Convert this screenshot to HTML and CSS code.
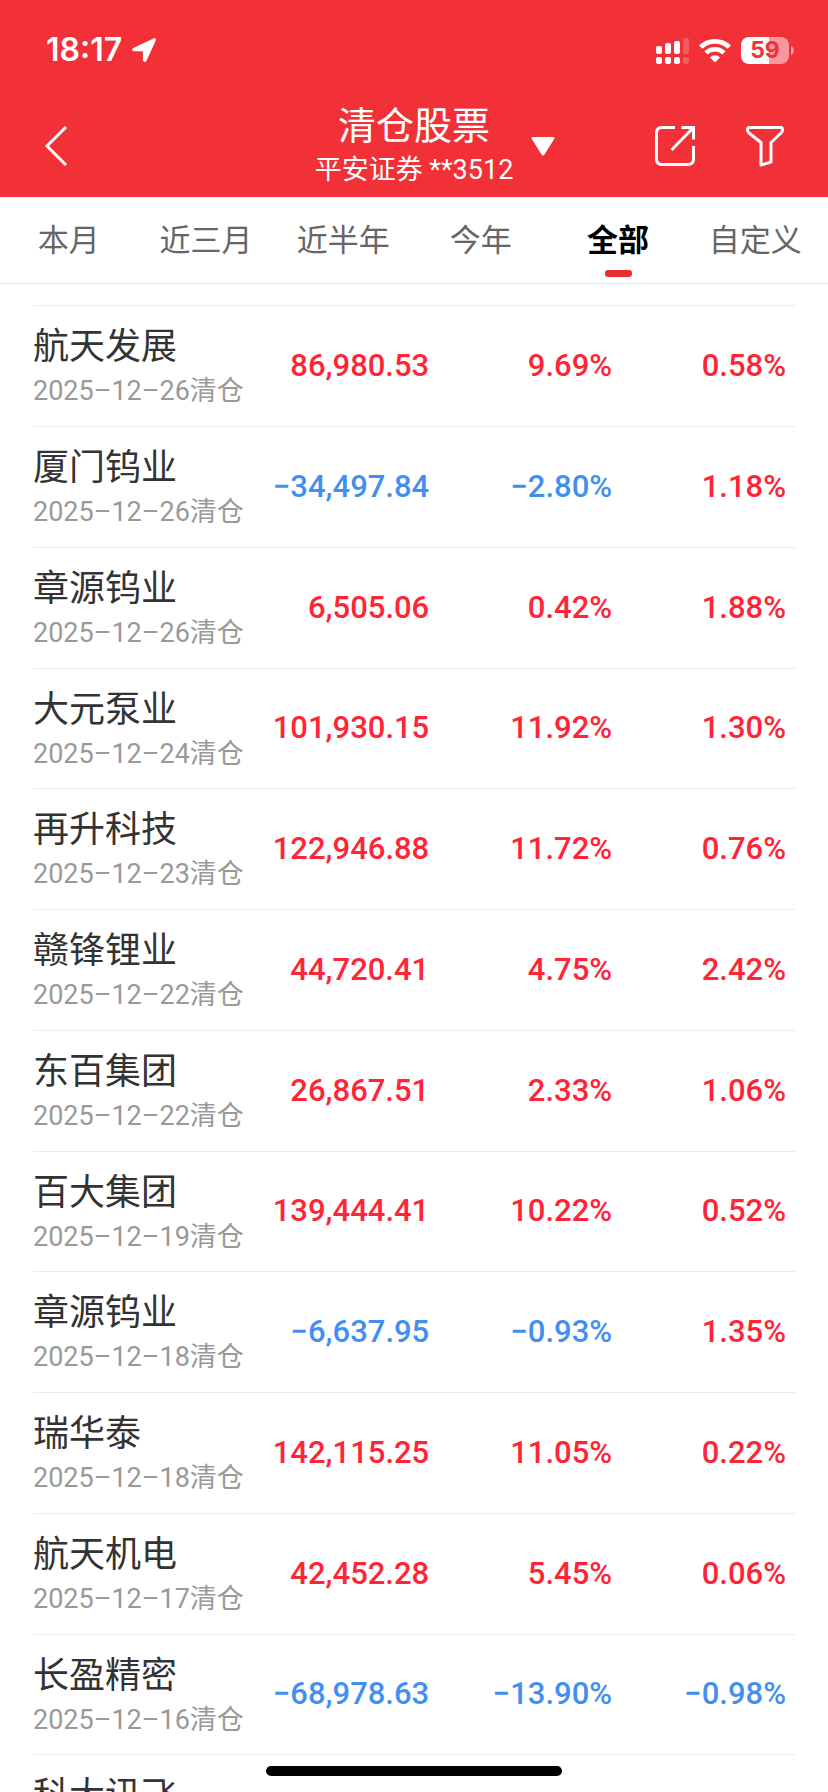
FILE: index.html
```html
<!DOCTYPE html>
<html lang="zh-CN">
<head>
<meta charset="utf-8">
<meta name="viewport" content="width=device-width, initial-scale=1">
<title>清仓股票</title>
<link rel="stylesheet" href="styles.css">
</head>
<body>
<header class="header">
  <div class="status">
    <div class="status-left">
      <span class="time">18:17</span>
      <svg class="location" width="24" height="24" viewBox="0 0 24 24" aria-hidden="true"><path d="M22 .3 1.300 10.100C-.5 11 0 13.200 2 13.200h8.300q.6 0 .6.6V22c0 2.200 2.700 2.600 3.500.9L23.800 2.400C24.400 1 23.400-.3 22 .3Z" fill="#fff"/></svg>
    </div>
    <div class="status-right">
      <svg width="33" height="27" viewBox="0 0 33 27" fill="#fff" aria-hidden="true">
        <rect x="0" y="9" width="6" height="8" rx="2"/><rect x="9" y="6" width="6" height="11" rx="2"/><rect x="18" y="4" width="6" height="13" rx="2"/>
        <rect x="0" y="20" width="6" height="7" rx="2"/><rect x="9" y="20" width="6" height="7" rx="2"/><rect x="18" y="20" width="6" height="7" rx="2"/>
        <g opacity=".2"><rect x="27" y="1" width="6" height="16" rx="2"/><rect x="27" y="20" width="6" height="7" rx="2"/></g>
      </svg>
      <svg class="wifi" width="32" height="25" viewBox="0 0 32 25" aria-hidden="true">
        <g fill="none" stroke="#fff" stroke-width="4.600"><path d="M1.700 9.200a20.500 20.500 0 0 1 28.600 0"/><path d="M7 14.900a13 13 0 0 1 18 0"/></g>
        <path d="M16 24.500 11 19.400a7 7 0 0 1 10 0Z" fill="#fff"/>
      </svg>
      <div class="battery"><span class="cell">59</span><svg width="3" height="9" viewBox="0 0 3 9" aria-hidden="true"><path d="M0 0q3 1.500 3 4.500T0 9Z" fill="#fff" opacity=".5"/></svg></div>
    </div>
  </div>
  <div class="nav">
    <button class="icon-button" aria-label="返回"><svg width="24" height="42" viewBox="0 0 24 42"><path d="M22 2 3 21l19 19" fill="none" stroke="#fff" stroke-width="3"/></svg></button>
    <button class="account">
      <span class="titles"><span class="title">清仓股票</span><span class="subtitle">平安证券 **3512</span></span>
      <svg class="caret" width="24" height="19" viewBox="0 0 24 19" aria-hidden="true"><path d="M2 0h20q2.500 0 1 2.200L13.500 17.500q-1.500 2-3 0L1 2.200Q-.5 0 2 0Z" fill="#fff"/></svg>
    </button>
    <div class="actions">
      <button class="icon-button" aria-label="分享"><svg width="42" height="42" viewBox="0 0 42 42" fill="none" stroke="#fff" stroke-width="3"><path d="M21 2.500H8Q2.500 2.500 2.500 8v26q0 5.500 5.500 5.500h26q5.500 0 5.500-5.500V21M27.500 2.500h12v12M38.500 3.500 17.500 25"/></svg></button>
      <button class="icon-button" aria-label="筛选"><svg width="38" height="42" viewBox="0 0 38 42" fill="none" stroke="#fff" stroke-width="3" stroke-linejoin="round"><path d="M3 2.500h32q1.500 0 1.500 2.500 0 1.500-1.500 3L25 17.500v19.500l-10 3V17.500L3 8Q1.500 6.500 1.500 5q0-2.500 1.500-2.500Z"/></svg></button>
    </div>
  </div>
</header>
<nav class="tabs">
  <button class="tab">本月</button>
  <button class="tab">近三月</button>
  <button class="tab">近半年</button>
  <button class="tab">今年</button>
  <button class="tab active">全部</button>
  <button class="tab">自定义</button>
</nav>
<main class="list">
  <table class="stocks">
    <colgroup><col class="col-stock"><col class="col-profit"><col class="col-rate"><col></colgroup>
    <tbody>
      <tr><td><div class="name">航天发展</div><div class="date">2025–12–26清仓</div></td><td class="up">86,980.53</td><td class="up">9.69%</td><td class="up">0.58%</td></tr>
      <tr><td><div class="name">厦门钨业</div><div class="date">2025–12–26清仓</div></td><td class="down">−34,497.84</td><td class="down">−2.80%</td><td class="up">1.18%</td></tr>
      <tr><td><div class="name">章源钨业</div><div class="date">2025–12–26清仓</div></td><td class="up">6,505.06</td><td class="up">0.42%</td><td class="up">1.88%</td></tr>
      <tr><td><div class="name">大元泵业</div><div class="date">2025–12–24清仓</div></td><td class="up">101,930.15</td><td class="up">11.92%</td><td class="up">1.30%</td></tr>
      <tr><td><div class="name">再升科技</div><div class="date">2025–12–23清仓</div></td><td class="up">122,946.88</td><td class="up">11.72%</td><td class="up">0.76%</td></tr>
      <tr><td><div class="name">赣锋锂业</div><div class="date">2025–12–22清仓</div></td><td class="up">44,720.41</td><td class="up">4.75%</td><td class="up">2.42%</td></tr>
      <tr><td><div class="name">东百集团</div><div class="date">2025–12–22清仓</div></td><td class="up">26,867.51</td><td class="up">2.33%</td><td class="up">1.06%</td></tr>
      <tr><td><div class="name">百大集团</div><div class="date">2025–12–19清仓</div></td><td class="up">139,444.41</td><td class="up">10.22%</td><td class="up">0.52%</td></tr>
      <tr><td><div class="name">章源钨业</div><div class="date">2025–12–18清仓</div></td><td class="down">−6,637.95</td><td class="down">−0.93%</td><td class="up">1.35%</td></tr>
      <tr><td><div class="name">瑞华泰</div><div class="date">2025–12–18清仓</div></td><td class="up">142,115.25</td><td class="up">11.05%</td><td class="up">0.22%</td></tr>
      <tr><td><div class="name">航天机电</div><div class="date">2025–12–17清仓</div></td><td class="up">42,452.28</td><td class="up">5.45%</td><td class="up">0.06%</td></tr>
      <tr><td><div class="name">长盈精密</div><div class="date">2025–12–16清仓</div></td><td class="down">−68,978.63</td><td class="down">−13.90%</td><td class="down">−0.98%</td></tr>
      <tr><td><div class="name">科大讯飞</div></td><td></td><td></td><td></td></tr>
    </tbody>
  </table>
</main>
<div class="home-bar"></div>
</body>
</html>
```
FILE: styles.css
```css
* { box-sizing: border-box; }

body {
  margin: 0;
  height: 100vh;
  overflow: hidden;
  display: flex;
  flex-direction: column;
  background: #fff;
  color: #333;
  font-family: Roboto, "Noto Sans CJK SC", sans-serif;
}

button {
  border: 0;
  padding: 0;
  background: none;
  color: inherit;
  font: inherit;
}

svg { display: block; flex: none; }

.header {
  flex: none;
  background: #f23038;
  color: #fff;
}

.status {
  height: 100px;
  padding: 0 34px 0 46px;
  display: flex;
  justify-content: space-between;
  align-items: center;
}

.status-left,
.status-right,
.battery {
  display: flex;
  align-items: center;
}

.status-left { gap: 10px; }
.status-right { gap: 10px; }

.time {
  font: 600 32px/40px Inter, sans-serif;
}

.battery { gap: 2px; }

.cell {
  width: 48px;
  height: 27px;
  border-radius: 8px;
  background: linear-gradient(90deg, #fff 58%, #f8989c 58%);
  color: #f23038;
  font: 700 23px/27px Inter, sans-serif;
  text-align: center;
}

.nav {
  height: 97px;
  padding: 0 44px 5px;
  display: grid;
  grid-template-columns: 1fr auto 1fr;
  align-items: center;
}

.nav > .icon-button { justify-self: start; }

.account {
  position: relative;
  text-align: center;
}

.titles {
  display: flex;
  flex-direction: column;
}

.title { font-size: 38px; line-height: 48px; }
.subtitle { font-size: 27px; line-height: 40px; }

.caret {
  position: absolute;
  left: calc(100% + 18px);
  top: 35px;
}

.actions {
  justify-self: end;
  display: flex;
  gap: 50px;
}

.tabs {
  flex: none;
  height: 87px;
  padding-right: 4px;
  display: grid;
  grid-template-columns: repeat(6, 1fr);
  border-bottom: 1px solid #e8e8e8;
}

.tab {
  position: relative;
  padding-bottom: 6px;
  color: #666;
  font-size: 31px;
}

.active { color: #000; font-weight: 700; }

.active::after {
  content: "";
  position: absolute;
  left: calc(50% - 13px);
  bottom: 6px;
  width: 27px;
  height: 7px;
  border-radius: 3px;
  background: #e92e30;
}

.list {
  flex: 1;
  min-height: 0;
  overflow: hidden;
  padding: 21px 33px 0;
}

.stocks {
  width: 100%;
  border-collapse: separate;
  border-spacing: 0;
  table-layout: fixed;
  border-top: 1px solid #ebebeb;
}

.col-stock { width: 28%; }
.col-profit { width: 24%; }
.col-rate { width: 24%; }

.stocks td {
  height: 121px;
  padding: 0 0 2px;
  border-bottom: 1px solid #ebebeb;
  font-size: 31px;
  font-weight: 500;
  text-align: right;
  white-space: nowrap;
}

.stocks tr:nth-child(4n) td { height: 120px; }
.stocks td:first-child { padding: 2px 0 0; text-align: left; }
.stocks td:last-child { padding-right: 9px; }
.stocks tr:last-child td { vertical-align: top; padding-top: 17px; }

.name { font-size: 36px; line-height: 48px; font-weight: 400; }
.date { font-size: 27px; line-height: 40px; font-weight: 400; color: #999; }

.up { color: #ff2436; }
.down { color: #438ff0; }

.home-bar {
  position: fixed;
  left: 50%;
  bottom: 16px;
  width: 296px;
  height: 10px;
  margin-left: -148px;
  border-radius: 5px;
  background: #000;
}
```
